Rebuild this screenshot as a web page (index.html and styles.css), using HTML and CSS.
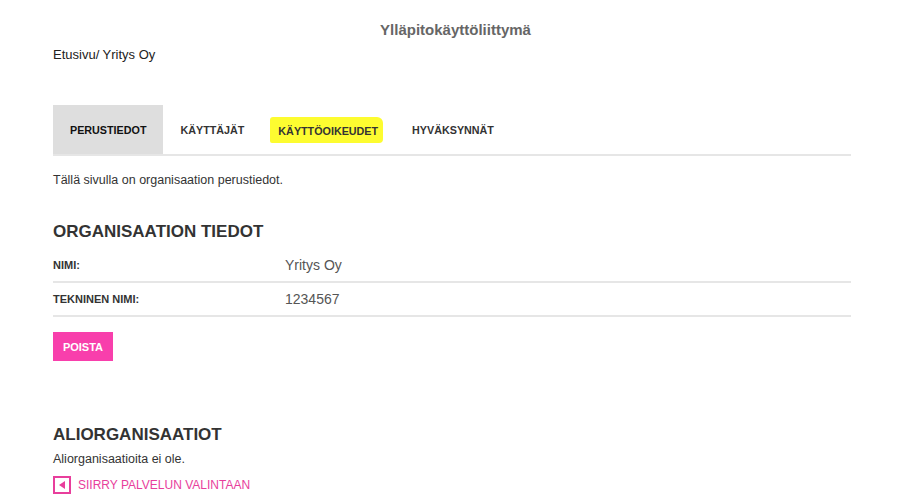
FILE: index.html
```html
<!DOCTYPE html>
<html>
<head>
  <title>Ylläpitokäyttöliittymä</title>
  <link rel="stylesheet" href="styles.css">
</head>
<body>
  <div class="page">
    <h1 class="site-title">Ylläpitokäyttöliittymä</h1>
    <div class="breadcrumb">Etusivu/ Yritys Oy</div>

    <ul class="tabs">
      <li class="tab active">Perustiedot</li>
      <li class="tab">Käyttäjät</li>
      <li class="tab"><span class="marker">Käyttöoikeudet</span></li>
      <li class="tab">Hyväksynnät</li>
    </ul>

    <p class="intro">Tällä sivulla on organisaation perustiedot.</p>

    <h2 class="section-title">Organisaation tiedot</h2>
    <div class="info-table">
      <div class="info-row">
        <div class="info-label">Nimi:</div>
        <div class="info-value">Yritys Oy</div>
      </div>
      <div class="info-row">
        <div class="info-label">Tekninen nimi:</div>
        <div class="info-value">1234567</div>
      </div>
    </div>
    <button class="btn-delete">Poista</button>

    <h2 class="section-title sub">Aliorganisaatiot</h2>
    <p class="empty">Aliorganisaatioita ei ole.</p>
    <a class="back-link" href="#">
      <span class="back-icon">
        <svg width="6" height="8" viewBox="0 0 6 8"><polygon points="6,0 6,8 0,4" fill="#e83e9c"/></svg>
      </span>
      Siirry palvelun valintaan
    </a>
  </div>
</body>
</html>
```

FILE: styles.css
```css
body {
  margin: 0;
  font-family: "Liberation Sans", Arial, sans-serif;
  color: #333;
  background: #fff;
}
.page {
  width: 798px;
  margin-left: 53px;
}
.site-title {
  margin: 0 0 0 7px;
  padding-top: 22px;
  text-align: center;
  font-size: 15px;
  color: #666;
  line-height: 16px;
}
.breadcrumb {
  margin-top: 9px;
  font-size: 13px;
  line-height: 15px;
  color: #222;
}
.tabs {
  list-style: none;
  margin: 43px 0 0;
  padding: 0;
  display: flex;
  border-bottom: 2px solid #e6e6e6;
}
.tab {
  padding: 0 17px;
  height: 49px;
  display: flex;
  align-items: center;
  font-size: 10.75px;
  font-weight: bold;
  text-transform: uppercase;
  color: #333;
}
.tab.active {
  background: #dedede;
  color: #111;
}
.marker {
  background: #fdfc30;
  padding: 8px 5px 6px 8px;
  margin: 0 -5px 0 -8px;
  border-radius: 3px 6px 4px 2px;
}
.intro {
  margin: 17px 0 0;
  font-size: 12.5px;
  line-height: 14px;
  color: #333;
}
.section-title {
  margin: 35px 0 0;
  font-size: 17px;
  line-height: 20px;
  text-transform: uppercase;
  color: #333;
}
.info-table {
  margin-top: 7px;
}
.info-row {
  display: flex;
  align-items: center;
  height: 32px;
  border-bottom: 2px solid #e6e6e6;
}
.info-label {
  width: 232px;
  font-size: 11px;
  font-weight: bold;
  text-transform: uppercase;
}
.info-value {
  font-size: 14px;
  color: #555;
}
.btn-delete {
  margin-top: 15px;
  width: 60px;
  height: 29px;
  border: none;
  background: #f83fac;
  color: #fff;
  font-family: inherit;
  font-size: 11px;
  font-weight: bold;
  text-transform: uppercase;
  padding: 0;
  display: block;
}
.section-title.sub {
  margin-top: 64px;
}
.empty {
  margin: 7px 0 0;
  font-size: 12.5px;
  line-height: 14px;
}
.back-link {
  margin-top: 10px;
  display: flex;
  align-items: center;
  gap: 7px;
  font-size: 12px;
  color: #e83e9c;
  text-decoration: none;
  text-transform: uppercase;
}
.back-icon {
  width: 14px;
  height: 14px;
  border: 2px solid #e83e9c;
  display: flex;
  align-items: center;
  justify-content: center;
}
```
